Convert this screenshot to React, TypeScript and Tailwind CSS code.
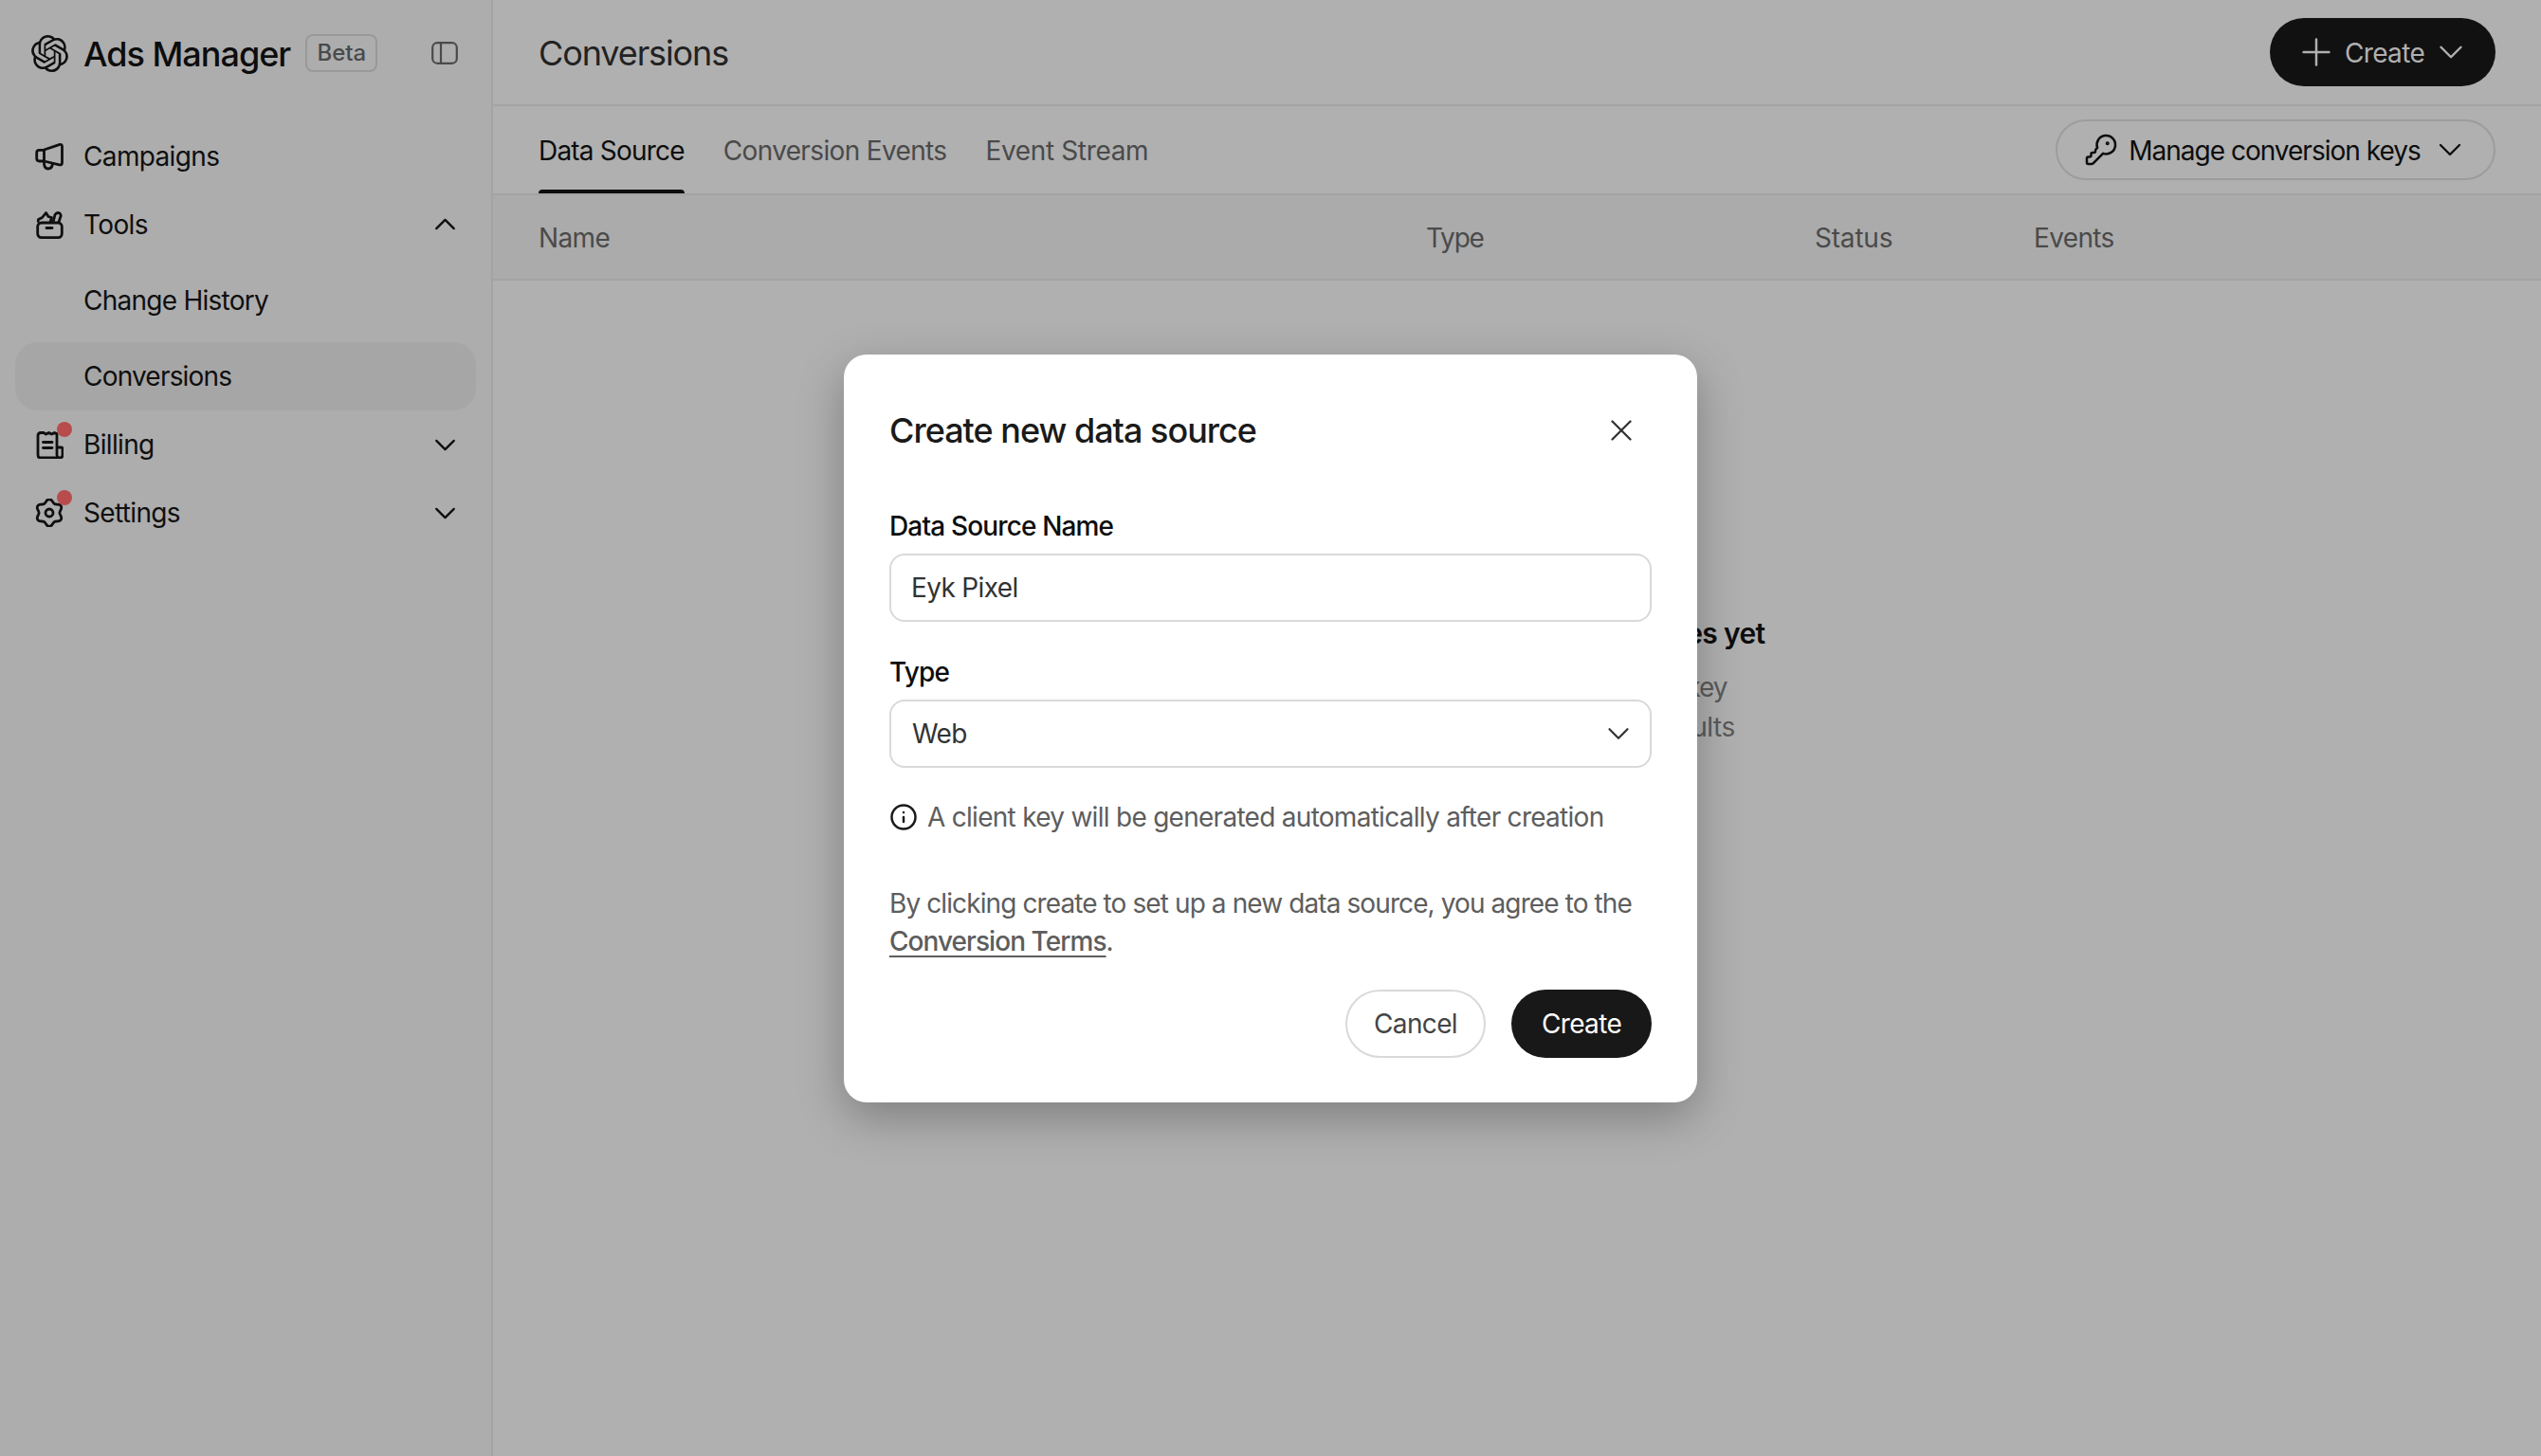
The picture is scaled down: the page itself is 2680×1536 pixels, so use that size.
import { ChevronDown, ChevronUp, Info, KeyRound, Plus, X } from 'lucide-react';
import { SiOpenai } from 'react-icons/si';

function MegaphoneIcon() {
    return (
        <svg width="30" height="30" viewBox="0 0 30 30" fill="none" stroke="#0f0f0f" strokeWidth="2.8" strokeLinejoin="round" strokeLinecap="round">
            <path d="M9.5 8 L25.5 2.6 Q28.5 1.8 28.5 4.5 V21.5 Q28.5 24.6 25.5 23.8 L9.5 20 Z" />
            <path d="M9.5 8.3 H4.5 Q1.7 8.3 1.7 11 V17 Q1.7 20 4.5 20 H9.5" />
            <path d="M9.5 20.5 Q9 27.5 13.5 28 Q18 28 18.5 22.5" />
        </svg>
    );
}

function ToolsIcon() {
    return (
        <svg width="30" height="30" viewBox="0 0 30 30" fill="none" stroke="#0f0f0f" strokeWidth="2.8" strokeLinejoin="round" strokeLinecap="round">
            <rect x="2.7" y="13" width="25.6" height="15.6" rx="4" />
            <path d="M12 18.5 H18" />
            <path d="M3.2 11.5 L3.5 9.5 L7.5 7.5 L11.5 2.5 L14 6.5 L17.5 7.5 L16 12.5" />
            <path d="M19 12.5 L21 4.5 Q23 1.5 26 3 Q28 5 26.5 7.5 L25 12.5" />
        </svg>
    );
}

function BillingIcon() {
    return (
        <svg width="30" height="30" viewBox="0 0 30 30" fill="none" stroke="#0f0f0f" strokeWidth="2.8" strokeLinejoin="round" strokeLinecap="round">
            <path d="M23 18 V3.5 L20.5 2.5 L17.5 4 L14.5 2.5 L11.5 4 L9 2.5 H6 Q3 2.5 3 5.5 V26 Q3 29 6 29 H26 Q29 29 29 26 V19.5 Q29 18 27 18 H23 V26 Q23 29 26 29" />
            <path d="M8.5 12.5 H18" />
            <path d="M8.5 18.5 H18" />
        </svg>
    );
}

// six lobed gear outline
function gearPath() {
    const points: string[] = [];
    for (let i = 0; i < 72; i++) {
        const a = (i / 72) * Math.PI * 2;
        const r = 12.6 + 1.7 * Math.cos(6 * a);
        const x = 15 + r * Math.sin(a);
        const y = 15 - r * Math.cos(a);
        points.push(`${x.toFixed(2)} ${y.toFixed(2)}`);
    }
    return `M${points.join(' L')} Z`;
}

function SettingsIcon() {
    return (
        <svg width="30" height="30" viewBox="0 0 30 30" fill="none" stroke="#0f0f0f" strokeWidth="2.8" strokeLinejoin="round">
            <path d={gearPath()} />
            <circle cx="15" cy="15" r="4" />
        </svg>
    );
}

function PanelIcon() {
    return (
        <svg width="28" height="24" viewBox="0 0 28 24" fill="none" stroke="#4a4a4a" strokeWidth="2.2" className="ml-auto">
            <rect x="1.2" y="1.2" width="25.6" height="21.6" rx="5" />
            <path d="M10 1.5 V22.5" />
        </svg>
    );
}

function NavItem({ label, icon, chevron, dot }: { label: string; icon: React.ReactNode; chevron?: 'up' | 'down'; dot?: boolean }) {
    return (
        <div className="flex h-[72px] items-center pl-[37px] pr-[30px]">
            <div className="relative flex w-[30px] items-center justify-center">
                {icon}
                {dot && <span className="absolute -top-[9px] left-[23px] h-4 w-4 rounded-full bg-[#b84c4c]" />}
            </div>
            <span className="ml-[21px] flex-1 text-[28px] text-[#0f0f0f]">{label}</span>
            {chevron === 'up' && <ChevronUp size={37} strokeWidth={1.5} color="#0f0f0f" className="-mt-[2px]" />}
            {chevron === 'down' && <ChevronDown size={37} strokeWidth={1.5} color="#0f0f0f" />}
        </div>
    );
}

export default function App() {
    return (
        <div className="relative flex h-screen w-full overflow-hidden bg-[#b0b0b0] font-['Inter',sans-serif] tracking-[-0.65px]">
            {/* Sidebar */}
            <aside className="w-[520px] shrink-0 border-r-2 border-r-[#a3a3a3] bg-[#adadad]">
                <div className="flex h-[112px] items-center pl-[33px] pr-[35px]">
                    <SiOpenai size={39} color="#0f0f0f" />
                    <span className="ml-[16px] pt-[2px] text-[36px] font-medium tracking-[-1px] text-[#0d0d0d]">Ads Manager</span>
                    <span className="ml-[16px] flex h-[40px] w-[76px] items-center justify-center rounded-[8px] border-2 border-[#999999] text-[24px] font-medium tracking-normal text-[#4a4a4a]">
                        Beta
                    </span>
                    <PanelIcon />
                </div>
                <nav className="mt-[17px]">
                    <NavItem label="Campaigns" icon={<MegaphoneIcon />} />
                    <NavItem label="Tools" icon={<ToolsIcon />} chevron="up" />
                    <div className="mx-4 mt-2 flex h-[72px] items-center pl-[72px] text-[28px] tracking-[-0.75px] text-[#0f0f0f]">Change History</div>
                    <div className="mx-4 mt-2 flex h-[72px] items-center rounded-[24px] bg-[#a6a6a6] pl-[72px] text-[28px] tracking-[-0.8px] text-[#0f0f0f]">
                        Conversions
                    </div>
                    <NavItem label="Billing" icon={<BillingIcon />} chevron="down" dot />
                    <NavItem label="Settings" icon={<SettingsIcon />} chevron="down" dot />
                </nav>
            </aside>

            {/* Main */}
            <main className="flex min-w-0 flex-1 flex-col">
                <header className="flex h-[112px] shrink-0 items-center justify-between border-b-2 border-b-[#a3a3a3] pl-[48px] pr-[48px]">
                    <h1 className="pt-[2px] text-[36px] tracking-[-1.1px] text-[#222222]">Conversions</h1>
                    <button className="flex h-[72px] w-[238px] items-center justify-center gap-[7px] rounded-full bg-[#111111] text-[28px] text-[#b0b0b0]">
                        <Plus size={46} strokeWidth={1.3} />
                        <span className="pt-[2px]">Create</span>
                        <ChevronDown size={42} strokeWidth={1.4} />
                    </button>
                </header>
                <div className="flex h-[94px] shrink-0 items-center justify-between border-b-2 border-b-[#a3a3a3] pl-[48px] pr-[48px]">
                    <div className="flex h-full gap-[41px] pt-[2px] text-[28px] text-[#4a4a4a]">
                        <div className="relative flex items-center tracking-[-0.8px] text-[#0d0d0d]">
                            Data Source
                            <span className="absolute inset-x-0 bottom-0 h-1 rounded-t-sm bg-[#0d0d0d]" />
                        </div>
                        <div className="flex items-center">Conversion Events</div>
                        <div className="flex items-center tracking-[-0.35px]">Event Stream</div>
                    </div>
                    <button className="flex h-[64px] w-[464px] items-center justify-center gap-[11px] rounded-full border-2 border-[#9c9c9c] pl-[2px] text-[28px] tracking-[-1px] text-[#0d0d0d]">
                        <KeyRound size={36} strokeWidth={1.7} className="-scale-x-100 rotate-90" />
                        <span className="pt-[2px]">Manage conversion keys</span>
                        <ChevronDown size={40} strokeWidth={1.4} />
                    </button>
                </div>
                <div className="grid h-[90px] shrink-0 grid-cols-[936px_410px_231px_1fr] items-center border-b-2 border-b-[#a3a3a3] bg-[#ababab] pl-[48px] pt-[2px] text-[28px] text-[#4a4a4a]">
                    <div>Name</div>
                    <div className="tracking-[-1.2px]">Type</div>
                    <div className="tracking-[-0.2px]">Status</div>
                    <div>Events</div>
                </div>
                <div className="flex flex-1 flex-col items-center pt-[352px] text-center">
                    <div className="text-[30px] leading-[40px] font-semibold text-[#0d0d0d]">No conversion event data sources yet</div>
                    <div className="mt-4 text-[28px] leading-[42px] text-[#5a5a5a]">
                        <p className="tracking-[-1.1px]">Create a source and add a client key</p>
                        <p className="tracking-[-0.45px]">to start measuring campaign results</p>
                    </div>
                </div>
            </main>

            {/* Dialog */}
            <div className="absolute inset-0 flex items-center justify-center pt-[1px]">
                <div className="w-[900px] rounded-[24px] bg-white px-12 pb-[47px] shadow-[0_16px_48px_rgba(0,0,0,0.28)]">
                    <div className="flex h-[114px] items-center justify-between pt-[45px] pr-[13px]">
                        <h2 className="text-[36px] font-medium tracking-[-1px] text-[#1a1a1a]">Create new data source</h2>
                        <X size={38} strokeWidth={1.5} color="#333333" />
                    </div>
                    <label className="mt-[49px] block text-[28px] leading-[36px] font-medium tracking-[-0.85px] text-[#0d0d0d]">Data Source Name</label>
                    <div className="mt-[11px] flex h-[72px] items-center rounded-[16px] border-2 border-[#d9d9d9] px-[21px] text-[28px] text-[#333333]">
                        Eyk Pixel
                    </div>
                    <label className="mt-[35px] block text-[28px] leading-[36px] font-medium tracking-[-0.85px] text-[#0d0d0d]">Type</label>
                    <div className="mt-[11px] flex h-[72px] items-center justify-between rounded-[16px] border-2 border-[#d9d9d9] pl-[22px] pr-[14px] text-[28px] text-[#333333]">
                        <span>Web</span>
                        <ChevronDown size={38} strokeWidth={1.4} color="#333333" />
                    </div>
                    <div className="mt-[34px] flex h-[36px] items-center gap-[10px] text-[28px] tracking-[-0.72px] text-[#5d5d5d]">
                        <Info size={30} strokeWidth={2} color="#1a1a1a" />
                        <span>A client key will be generated automatically after creation</span>
                    </div>
                    <p className="mt-[53px] text-[28px] leading-[40px] tracking-[-0.9px] text-[#5d5d5d]">
                        By clicking create to set up a new data source, you agree to the{' '}
                        <a className="font-medium tracking-[-0.95px] underline underline-offset-[5px]">Conversion Terms</a>.
                    </p>
                    <div className="mt-[31px] flex justify-end gap-[27px]">
                        <button className="h-[72px] w-[148px] rounded-full border-2 border-[#d9d9d9] text-[28px] text-[#444444]">Cancel</button>
                        <button className="h-[72px] w-[148px] rounded-full bg-[#181818] text-[28px] text-white">Create</button>
                    </div>
                </div>
            </div>
        </div>
    );
}
